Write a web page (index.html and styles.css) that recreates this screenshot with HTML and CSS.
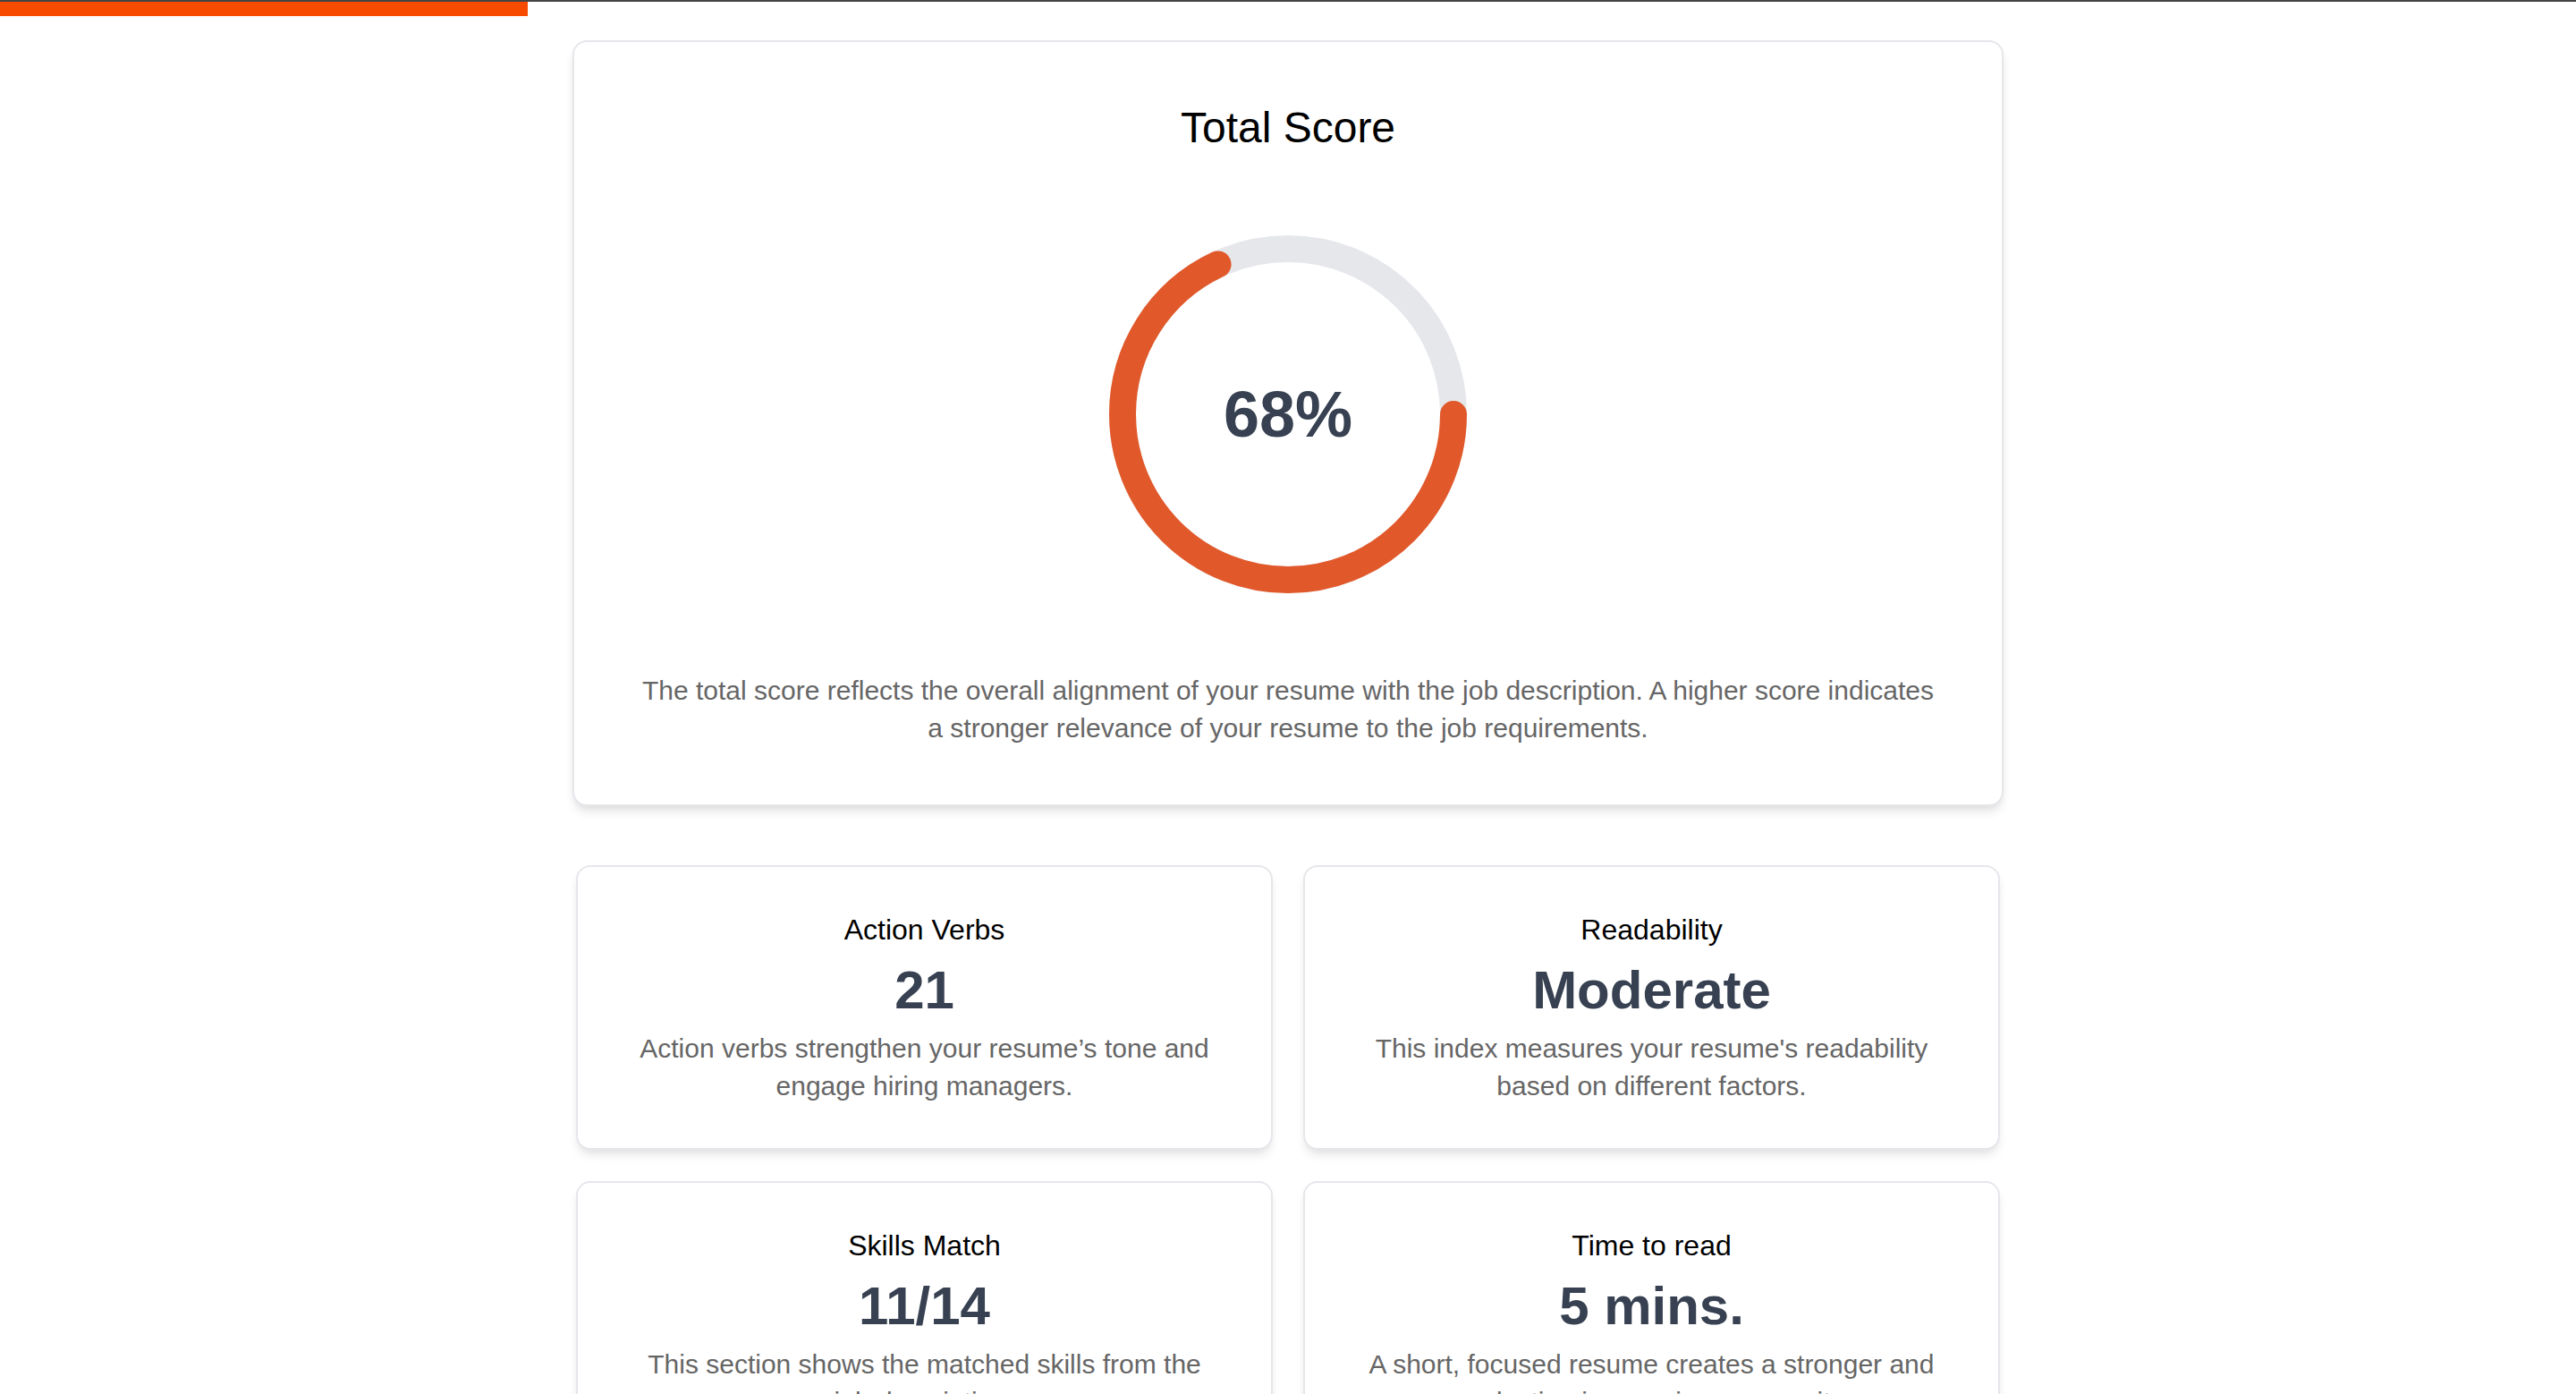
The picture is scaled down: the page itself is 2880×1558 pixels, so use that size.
FILE: index.html
```html
<!DOCTYPE html>
<html lang="en">
<head>
<meta charset="utf-8">
<title>Resume Score</title>
<link rel="stylesheet" href="styles.css">
</head>
<body>
<div class="topline"></div>
<div class="progress"><div class="progress-fill"></div></div>

<main class="page">
  <section class="score-card">
    <h2 class="score-title">Total Score</h2>
    <div class="ring">
      <svg class="ring-svg" width="400" height="400" viewBox="0 0 400 400" aria-hidden="true">
        <circle cx="200" cy="200" r="185" fill="none" stroke="#e5e7eb" stroke-width="30"/>
        <circle cx="200" cy="200" r="185" fill="none" stroke="#e1592a" stroke-width="30" stroke-linecap="round" stroke-dasharray="790.43 1162.39"/>
      </svg>
      <div class="ring-value">68%</div>
    </div>
    <p class="score-desc">The total score reflects the overall alignment of your resume with the job description. A higher score indicates a stronger relevance of your resume to the job requirements.</p>
  </section>

  <section class="metrics">
    <div class="metric">
      <h3 class="metric-title">Action Verbs</h3>
      <div class="metric-value">21</div>
      <p class="metric-desc">Action verbs strengthen your resume’s tone and engage hiring managers.</p>
    </div>
    <div class="metric">
      <h3 class="metric-title">Readability</h3>
      <div class="metric-value">Moderate</div>
      <p class="metric-desc">This index measures your resume's readability based on different factors.</p>
    </div>
    <div class="metric">
      <h3 class="metric-title">Skills Match</h3>
      <div class="metric-value">11/14</div>
      <p class="metric-desc">This section shows the matched skills from the job description.</p>
    </div>
    <div class="metric">
      <h3 class="metric-title">Time to read</h3>
      <div class="metric-value">5 mins.</div>
      <p class="metric-desc">A short, focused resume creates a stronger and more lasting impression on recruiters.</p>
    </div>
  </section>
</main>
</body>
</html>
```

FILE: styles.css
```css
* { box-sizing: border-box; }

html, body {
  margin: 0;
  padding: 0;
  background: #ffffff;
  font-family: "Liberation Sans", Arial, Helvetica, sans-serif;
}

.topline {
  height: 2px;
  background: #444444;
}

.progress {
  height: 16px;
}

.progress-fill {
  width: 590px;
  height: 100%;
  background: #f74c00;
}

.page {
  width: 1600px;
  margin: 27px auto 0;
}

.score-card {
  background: #fff;
  border: 2px solid #e6e7eb;
  border-radius: 16px;
  box-shadow: 0 8px 12px -2px rgba(0, 0, 0, 0.10), 0 4px 8px -4px rgba(0, 0, 0, 0.08);
  padding: 64px 64px 64px;
  display: flex;
  flex-direction: column;
  align-items: center;
}

.score-title {
  margin: 0;
  font-size: 48px;
  line-height: 64px;
  font-weight: 400;
  color: #000;
}

.ring {
  margin-top: 88px;
  width: 400px;
  height: 400px;
  display: grid;
  place-items: center;
}

.ring-svg,
.ring-value {
  grid-area: 1 / 1;
}

.ring-svg { display: block; }

.ring-value {
  font-size: 72px;
  line-height: 80px;
  font-weight: 700;
  color: #374151;
}

.score-desc {
  margin: 88px 0 0;
  font-size: 30px;
  line-height: 42px;
  color: #666666;
  text-align: center;
}

.metrics {
  margin: 66px 4px 0;
  display: grid;
  grid-template-columns: 1fr 1fr;
  column-gap: 34px;
  row-gap: 35px;
}

.metric {
  background: #fff;
  border: 2px solid #e6e7eb;
  border-radius: 16px;
  box-shadow: 0 8px 12px -2px rgba(0, 0, 0, 0.09), 0 4px 8px -4px rgba(0, 0, 0, 0.07);
  padding: 46px 60px 48px;
  text-align: center;
}

.metric-title {
  margin: 0;
  font-size: 32px;
  line-height: 48px;
  font-weight: 400;
  color: #000;
}

.metric-value {
  margin-top: 8px;
  font-size: 60px;
  line-height: 72px;
  font-weight: 700;
  color: #374151;
}

.metric-desc {
  margin: 8px 0 0;
  font-size: 30px;
  line-height: 42px;
  color: #666666;
}
```
